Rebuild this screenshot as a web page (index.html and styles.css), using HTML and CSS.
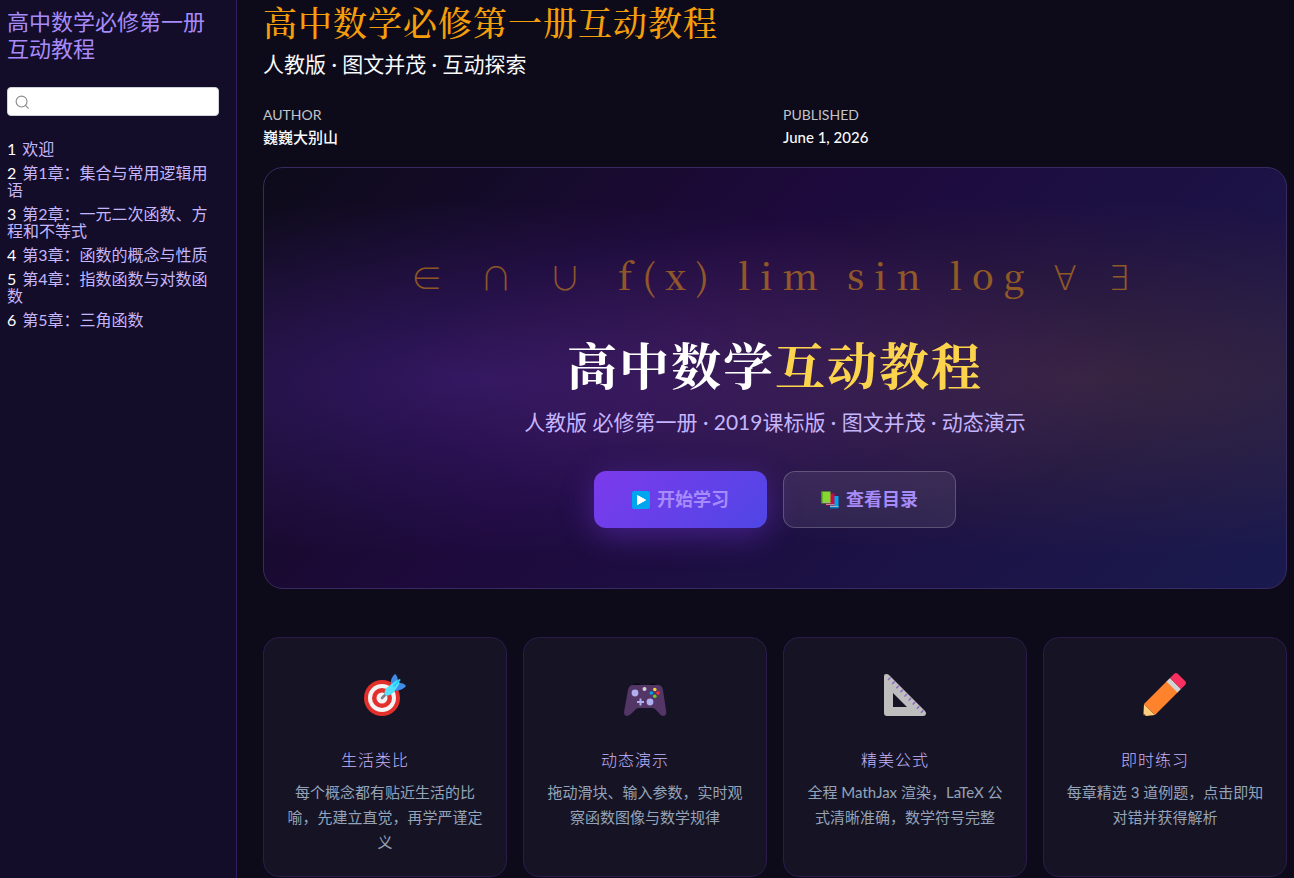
FILE: index.html
```html
<!DOCTYPE html>
<html lang="zh-CN">
<head>
    <meta charset="UTF-8">
    <meta name="viewport" content="width=device-width, initial-scale=1.0">
    <title>高中数学必修第一册互动教程</title>
    <link rel="stylesheet" href="styles.css">
</head>
<body>
    <div class="layout">
        <aside class="sidebar">
            <a class="sidebar-title" href="#">高中数学必修第一册互动教程</a>
            <div class="search">
                <svg class="search-icon" viewBox="0 0 16 16" aria-hidden="true">
                    <circle cx="7" cy="8" r="5.8" fill="none" stroke="#8b8b8b" stroke-width="1.2"/>
                    <path d="M11.2 12.2 L14.6 15.6" stroke="#8b8b8b" stroke-width="1.2"/>
                </svg>
                <input class="search-input" type="search" aria-label="搜索">
            </div>
            <nav>
                <ul class="chapters">
                    <li><a href="#welcome"><span class="num">1</span>欢迎</a></li>
                    <li><a href="#ch1"><span class="num">2</span>第1章：集合与常用逻辑用语</a></li>
                    <li><a href="#ch2"><span class="num">3</span>第2章：一元二次函数、方程和不等式</a></li>
                    <li><a href="#ch3"><span class="num">4</span>第3章：函数的概念与性质</a></li>
                    <li><a href="#ch4"><span class="num">5</span>第4章：指数函数与对数函数</a></li>
                    <li><a href="#ch5"><span class="num">6</span>第5章：三角函数</a></li>
                </ul>
            </nav>
        </aside>

        <main class="content">
            <header>
                <h1 class="page-title">高中数学必修第一册互动教程</h1>
                <p class="page-subtitle">人教版 · 图文并茂 · 互动探索</p>
                <dl class="meta">
                    <div>
                        <dt>AUTHOR</dt>
                        <dd>巍巍大别山</dd>
                    </div>
                    <div>
                        <dt>PUBLISHED</dt>
                        <dd>June 1, 2026</dd>
                    </div>
                </dl>
            </header>

            <section class="hero" id="welcome">
                <div class="hero-symbols"><span class="sets">∈ ∩ ∪ </span>f(x) lim sin log <span class="quantifiers">∀ ∃</span></div>
                <h2 class="hero-title">高中数学<span class="gold">互动教程</span></h2>
                <p class="hero-subtitle">人教版 必修第一册 · 2019课标版 · 图文并茂 · 动态演示</p>
                <div class="hero-actions">
                    <a class="btn btn-primary" href="#ch1">
                        <svg class="btn-icon" viewBox="0 0 18 18" aria-hidden="true">
                            <rect width="18" height="18" rx="2" fill="#00a6ed"/>
                            <path d="M5.5 4.6 L13.6 9 L5.5 13.6 Z" fill="#fff" stroke="#fff" stroke-linejoin="round"/>
                        </svg>
                        开始学习
                    </a>
                    <a class="btn btn-ghost" href="#features">
                        <svg class="btn-icon" viewBox="0 0 18 18" aria-hidden="true">
                            <path d="M9 5h8.5v12H9z" fill="#00a6ed"/>
                            <path d="M9 15h8.5v1H9z" fill="#a9b4c4"/>
                            <path d="M9 16h8.5v1.5H9z" fill="#0074ba"/>
                            <path d="M5 2.5h8.5v12H5z" fill="#ca0b4a"/>
                            <path d="M5 13h8.5v1H5z" fill="#b98a9c"/>
                            <path d="M0.5 0.5h9v11h-9z" fill="#86d72f"/>
                            <path d="M0.5 0.5h1v12h-1z" fill="#44911b"/>
                            <path d="M1.5 11h8v1h-8z" fill="#a5b58f"/>
                            <path d="M0.5 12h9v0.6h-9z" fill="#44911b"/>
                        </svg>
                        查看目录
                    </a>
                </div>
            </section>

            <section class="features" id="features">
                <article class="card">
                    <svg class="card-icon" viewBox="0 -2 48 48" aria-hidden="true">
                        <circle cx="21" cy="26" r="18" fill="#e3302c"/>
                        <circle cx="21" cy="26" r="14" fill="#f4f4f4"/>
                        <circle cx="21" cy="26" r="10" fill="#e3302c"/>
                        <circle cx="21" cy="26" r="5.5" fill="#f4f4f4"/>
                        <path d="M21 26 L26 21" stroke="#7d7d8d" stroke-width="2.5" stroke-linecap="round"/>
                        <path d="M30 13 Q29 6 34 2 Q36 3 37 8 L35 14 Z" fill="#3f8de8"/>
                        <path d="M34 17 L39 11 Q43 11 45 14 Q42 18 35 19 Z" fill="#3f8de8"/>
                        <path d="M24 23 Q22 18 28 14 L36 8 L39 11 L33 20 Q28 25 24 23 Z" fill="#50e2ff"/>
                        <path d="M33 14 L38.5 8" stroke="#26c9fc" stroke-width="2" stroke-linecap="round"/>
                    </svg>
                    <h3>生活类比</h3>
                    <p>每个概念都有贴近生活的比喻，先建立直觉，再学严谨定义</p>
                </article>
                <article class="card">
                    <svg class="card-icon" viewBox="0 -2 48 48" aria-hidden="true">
                        <path d="M14 12.5 h4 M30 12.5 h4" stroke="#080810" stroke-width="2" stroke-linecap="round"/>
                        <path d="M12 13 H37 Q41 13 42 18 L45 38 Q46 44 42 44 Q40 44 38 41 L34 37 Q33 36 31 36 H18 Q16 36 15 37 L11 41 Q8 44 6 44 Q3 44 3 40 L7 18 Q8 13 12 13 Z" fill="#533566"/>
                        <circle cx="14" cy="21" r="3.4" fill="#aeaef0"/>
                        <circle cx="29" cy="30" r="3.4" fill="#aeaef0"/>
                        <path d="M19.5 26.5 v7 M16 30 h7" stroke="#aeaef0" stroke-width="2"/>
                        <circle cx="23.5" cy="17" r="2" fill="#d3d3d3"/>
                        <circle cx="33.8" cy="17.5" r="1.8" fill="#fcd53f"/>
                        <circle cx="30.3" cy="21" r="1.8" fill="#00a6ed"/>
                        <circle cx="37" cy="21" r="1.8" fill="#f8312f"/>
                        <circle cx="33.8" cy="24.3" r="1.8" fill="#67ce28"/>
                    </svg>
                    <h3>动态演示</h3>
                    <p>拖动滑块、输入参数，实时观察函数图像与数学规律</p>
                </article>
                <article class="card">
                    <svg class="card-icon" viewBox="0 0 48 48" aria-hidden="true">
                        <path fill-rule="evenodd" d="M3 6 Q3 4 5 4 Q7 4 8 5 L44 41 Q46 43 44.5 45 Q44 46 42 46 H6 Q3 46 3 43 Z M12 23 V37 H26 Z" fill="#bebebe"/>
                        <path d="M7 10 l2.5 -2.5 M11.2 14.1 l2.5 -2.5 M15.3 18.2 l2.5 -2.5 M19.4 22.3 l2.5 -2.5 M23.5 26.4 l2.5 -2.5 M27.6 30.5 l2.5 -2.5 M31.7 34.6 l2.5 -2.5 M35.8 38.7 l2.5 -2.5 M39.9 42.8 l2.5 -2.5" stroke="#8d65c5" stroke-width="1.4"/>
                    </svg>
                    <h3>精美公式</h3>
                    <p>全程 MathJax 渲染，LaTeX 公式清晰准确，数学符号完整</p>
                </article>
                <article class="card">
                    <svg class="card-icon" viewBox="0 0 48 48" aria-hidden="true">
                        <path d="M3 34 L14 45 L5 46 Q2 46 2.5 43 Z" fill="#ffce7c"/>
                        <path d="M2.5 43.5 L5 45.8 L4 46 Q2 46 2.3 44.5 Z" fill="#402a32"/>
                        <path d="M26 11 L37 22 L14 45 L3 34 Z" fill="#ff822d"/>
                        <path d="M29 8 L40 19 L36.5 22.5 L25.5 11.5 Z" fill="#d3d3d3"/>
                        <path d="M33 4 Q35 2 37 4 L44 11 Q46 13 44 15 L40 19 L29 8 Z" fill="#f92f60"/>
                    </svg>
                    <h3>即时练习</h3>
                    <p>每章精选 3 道例题，点击即知对错并获得解析</p>
                </article>
            </section>
        </main>
    </div>
</body>
</html>
```

FILE: styles.css
```css
* {
    box-sizing: border-box;
}
body {
    margin: 0;
    background: #0d0b1a;
    color: #f8fafc;
    font-family: Lato, "Noto Sans CJK SC", sans-serif;
    font-size: 16px;
}
h1, h2, h3, p, ul, dl, dd {
    margin: 0;
    padding: 0;
}
a {
    color: #c4b5fd;
    text-decoration: none;
}
.layout {
    display: grid;
    grid-template-columns: 237px 1fr;
    height: 100vh;
    overflow: hidden;
}

/* Sidebar */
.sidebar {
    padding: 8px 17px 0 7px;
    background: #130d29;
    border-right: 1px solid #341b62;
}
.sidebar-title {
    display: block;
    color: #a78bfa;
    font-size: 22px;
    line-height: 27px;
}
.search {
    display: flex;
    align-items: center;
    gap: 4px;
    height: 29px;
    margin: 25px 0 24px;
    padding: 0 7px;
    background: #fff;
    border: 1px solid #ced4da;
    border-radius: 4px;
}
.search-icon {
    flex: none;
    width: 15px;
    height: 15px;
}
.search-input {
    flex: 1;
    min-width: 0;
    border: none;
    outline: none;
    background: transparent;
    font-size: 14px;
}
.chapters {
    display: grid;
    gap: 7px;
    list-style: none;
    line-height: 17px;
}
.chapters .num {
    margin-right: 6px;
    color: #fff;
}

/* Page header */
.content {
    padding: 0 7px 0 26px;
}
.page-title {
    font-family: "Noto Serif CJK SC", "Noto Sans CJK SC", serif;
    color: #f59e0b;
    font-size: 34px;
    font-weight: 500;
    line-height: 44px;
    letter-spacing: 1px;
}
.page-subtitle {
    margin-top: 5px;
    font-size: 21px;
    line-height: 30px;
}
.meta {
    display: grid;
    grid-template-columns: 1fr 1fr;
    gap: 16px;
    margin: 25px 0 18px;
}
.meta dt {
    color: #c4c4c8;
    font-size: 14px;
    line-height: 22px;
}
.meta dd {
    font-size: 15px;
    font-weight: 500;
    line-height: 23px;
}

/* Hero */
.hero {
    padding: 75px 40px 60px;
    background:
        radial-gradient(ellipse at 20% 50%, rgba(124, 58, 237, 0.25) 0%, transparent 60%),
        radial-gradient(ellipse at 80% 50%, rgba(245, 158, 11, 0.12) 0%, transparent 60%),
        linear-gradient(135deg, #0d0b1a 0%, #1e0a3c 40%, #1a1a4e 100%);
    border: 1px solid #3a2a62;
    border-radius: 20px;
    text-align: center;
}
.hero-symbols {
    color: #f59e0b;
    font-family: "Noto Serif CJK SC", "Liberation Serif", "Noto Sans CJK SC", serif;
    font-size: 36px;
    font-weight: 500;
    line-height: 64px;
    letter-spacing: 10px;
    opacity: 0.5;
}
.hero-symbols .sets {
    font-family: "Noto Sans CJK SC", sans-serif;
    font-size: 32px;
    font-weight: 300;
    line-height: 1;
    letter-spacing: 15px;
}
.hero-symbols .quantifiers {
    font-family: "DejaVu Sans", sans-serif;
    font-size: 34px;
    font-weight: 200;
    line-height: 1;
}
.hero-title {
    margin-top: 20px;
    color: #fff;
    font-family: "Noto Serif CJK SC", "Noto Sans CJK SC", serif;
    font-size: 50px;
    font-weight: 700;
    line-height: 72px;
    letter-spacing: 2px;
}
.hero-title .gold {
    color: #fcd34d;
}
.hero-subtitle {
    margin-top: 5px;
    color: #c4b5fd;
    font-size: 21px;
    line-height: 35px;
}
.hero-actions {
    display: flex;
    justify-content: center;
    gap: 16px;
    margin-top: 32px;
}
.btn {
    display: flex;
    align-items: center;
    gap: 7px;
    padding: 15px 37px;
    border: 1px solid transparent;
    border-radius: 12px;
    color: #a78bfa;
    font-size: 18px;
    font-weight: 700;
    line-height: 25px;
}
.btn-icon {
    width: 18px;
    height: 18px;
}
.btn-primary {
    background: linear-gradient(135deg, #7c3aed, #4f46e5) border-box;
    box-shadow: 0 8px 32px rgba(124, 58, 237, 0.4);
}
.btn-ghost {
    background: rgba(255, 255, 255, 0.08);
    border-color: rgba(255, 255, 255, 0.2);
}

/* Feature cards */
.features {
    display: grid;
    grid-template-columns: repeat(4, 1fr);
    gap: 16px;
    margin-top: 48px;
}
.card {
    padding: 32px 20px 21px;
    background: #161424;
    border: 1px solid #2b1b4b;
    border-radius: 16px;
    text-align: center;
}
.card-icon {
    display: block;
    width: 48px;
    height: 48px;
    margin: 0 auto 30px;
}
.card h3 {
    padding-right: 20px;
    color: #c4b5fd;
    font-size: 16px;
    font-weight: 300;
    line-height: 24px;
    letter-spacing: 1px;
}
.card p {
    margin-top: 8px;
    color: #94a3b8;
    font-size: 15px;
    line-height: 25px;
}
```
